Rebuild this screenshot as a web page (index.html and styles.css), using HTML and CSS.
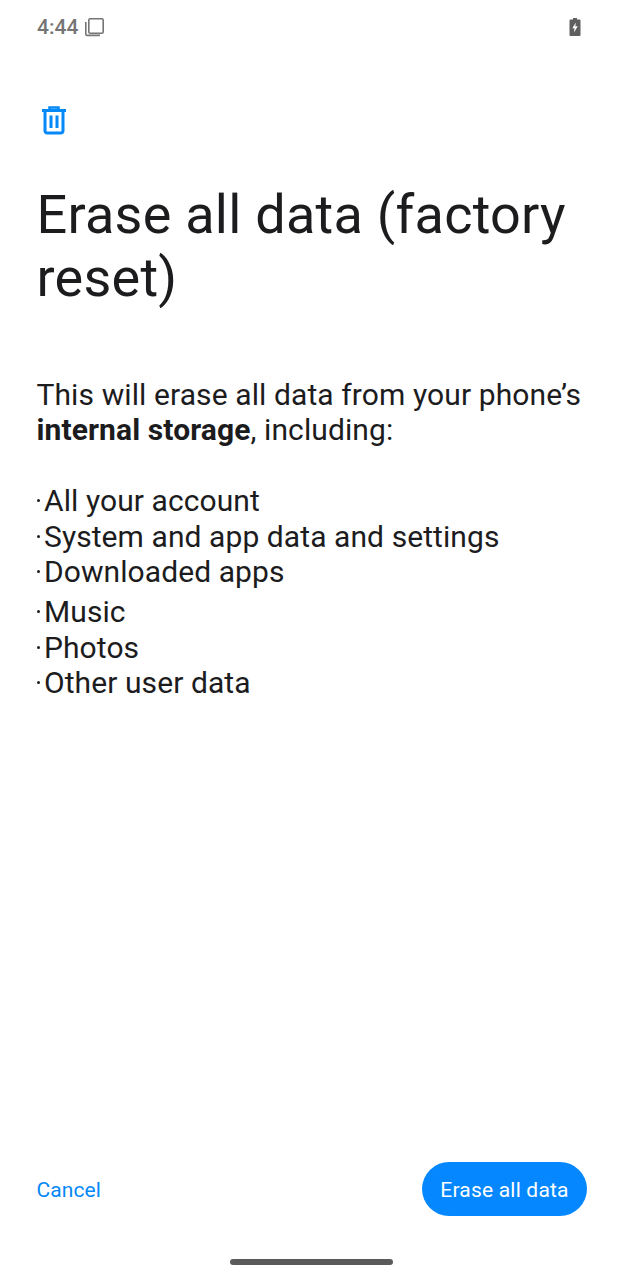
FILE: index.html
```html
<!DOCTYPE html>
<html lang="en">

<head>
    <meta charset="UTF-8">
    <meta name="viewport" content="width=device-width, initial-scale=1.0">
    <title>Erase all data</title>
    <link rel="stylesheet" href="styles.css">
</head>

<body>
    <div class="phone">
        <div class="status-bar">
            <div class="status-left">
                <span class="time">4:44</span>
                <svg class="copy-icon" width="22" height="22" viewBox="0 0 22 22" fill="none" stroke="#757575" stroke-width="1.600">
                    <rect x="5.800" y="2.800" width="14.400" height="14.400" rx="1.400"></rect>
                    <path d="M2.800 6v12.200a1.200 1.200 0 0 0 1.200 1.200h13"></path>
                </svg>
            </div>
            <svg class="battery-icon" width="14" height="20" viewBox="0 0 14 20">
                <path fill="#5f5f5f" d="M5 1h4v1.500h2.500a1 1 0 0 1 1 1V18a1 1 0 0 1-1 1h-9a1 1 0 0 1-1-1V3.500a1 1 0 0 1 1-1H5z"></path>
                <path fill="#fff" d="M7.800 5.500 4.300 11.300h2.200L6 15.500l3.700-6.200H7.300z"></path>
            </svg>
        </div>

        <div class="content">
            <svg class="trash-icon" width="26" height="30" viewBox="0 0 26 30" fill="none" stroke="#0588f8" stroke-width="3">
                <path d="M1 5.500h24"></path>
                <path d="M8.500 5V2.500h9V5" stroke-width="2.500"></path>
                <path d="M4 5.500v20a2.500 2.500 0 0 0 2.500 2.500h13a2.500 2.500 0 0 0 2.500-2.500v-20"></path>
                <path d="M10 10.500v12.500M16 10.500v12.500"></path>
            </svg>

            <h1 class="title">Erase all data (factory reset)</h1>

            <p class="intro">This will erase all data from your phone’s <b>internal storage</b>, including:</p>

            <ul class="items">
                <li>All your account</li>
                <li>System and app data and settings</li>
                <li>Downloaded apps</li>
            </ul>
            <ul class="items items-second">
                <li>Music</li>
                <li>Photos</li>
                <li>Other user data</li>
            </ul>
        </div>

        <div class="actions">
            <a class="cancel">Cancel</a>
            <a class="erase-btn">Erase all data</a>
        </div>

        <div class="nav-bar">
            <div class="nav-handle"></div>
        </div>
    </div>
</body>

</html>
```

FILE: styles.css
```css
* {
    box-sizing: border-box;
}

body {
    margin: 0;
    background: #fff;
    font-family: Roboto, 'Noto Sans', sans-serif;
    color: #1c1c1e;
}

.phone {
    height: 1280px;
    display: flex;
    flex-direction: column;
}

.status-bar {
    height: 54px;
    padding: 0 41px 0 37px;
    display: flex;
    align-items: center;
    justify-content: space-between;
}

.status-left {
    display: flex;
    align-items: center;
    gap: 5px;
}

.time {
    font-size: 21px;
    font-weight: 500;
    color: #757575;
}

.content {
    flex: 1;
    padding: 51px 36.500px 0;
}

.trash-icon {
    display: block;
    margin-left: 4.500px;
}

.title {
    margin: 48px 0 0;
    font-size: 54px;
    font-weight: 400;
    letter-spacing: 0.25px;
    line-height: 63px;
}

.intro {
    margin: 68px 0 0;
    font-size: 30px;
    letter-spacing: 0.1px;
    line-height: 35px;
}

.intro b {
    font-weight: 700;
}

.items {
    margin: 36px 0 0;
    padding: 0;
    list-style: none;
    font-size: 30px;
    letter-spacing: 0.08px;
    line-height: 35.500px;
}

.items-second {
    margin-top: 4.500px;
}

.items li {
    display: flex;
    align-items: center;
}

.items li::before {
    content: "";
    width: 3px;
    height: 3px;
    margin: 0 4.500px 0 0;
    border-radius: 50%;
    background: #1c1c1e;
}

.actions {
    padding: 0 36px 0 36.500px;
    display: flex;
    align-items: center;
    justify-content: space-between;
}

.cancel {
    padding-top: 2px;
    font-size: 21px;
    letter-spacing: 0.1px;
    color: #0588f8;
}

.erase-btn {
    width: 165px;
    height: 54px;
    padding-top: 2px;
    border-radius: 27px;
    background: #0588ff;
    color: #fff;
    font-size: 21px;
    letter-spacing: 0.2px;
    display: flex;
    align-items: center;
    justify-content: center;
}

.nav-bar {
    height: 64px;
    display: flex;
    justify-content: center;
    padding-top: 43px;
}

.nav-handle {
    width: 163px;
    height: 6px;
    border-radius: 3px;
    background: #5a5a5a;
}
```
